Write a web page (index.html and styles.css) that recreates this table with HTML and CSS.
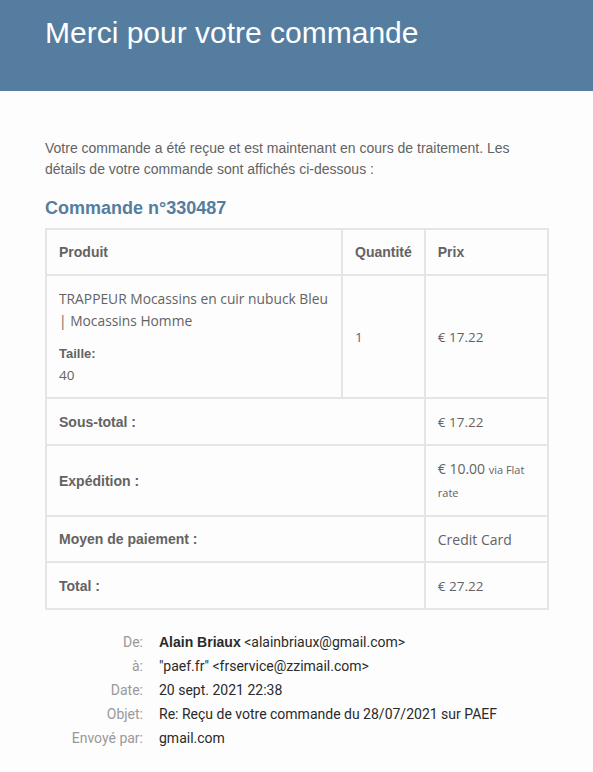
FILE: index.html
```html
<!DOCTYPE html>
<html lang="fr">
<head>
<meta charset="utf-8">
<title>Merci pour votre commande</title>
<link rel="stylesheet" href="styles.css">
</head>
<body>
<header class="hero">
  <h1 class="hero-title">Merci pour votre commande</h1>
</header>
<main class="content">
  <p class="intro">Votre commande a été reçue et est maintenant en cours de traitement. Les détails de votre commande sont affichés ci-dessous :</p>
  <h2 class="order-title">Commande n°330487</h2>
  <table class="order">
    <thead>
      <tr class="row-head">
        <th class="c-prod">Produit</th>
        <th class="c-qty">Quantité</th>
        <th class="c-price">Prix</th>
      </tr>
    </thead>
    <tbody>
      <tr class="row-item">
        <td class="c-prod g">
          <div class="prod-name">TRAPPEUR Mocassins en cuir nubuck Bleu<br>| Mocassins Homme</div>
          <div class="meta-label">Taille:</div>
          <div class="meta-val">40</div>
        </td>
        <td class="c-qty g">1</td>
        <td class="c-price g">€ 17.22</td>
      </tr>
    </tbody>
    <tfoot>
      <tr class="row-sub">
        <th colspan="2">Sous-total :</th>
        <td class="g">€ 17.22</td>
      </tr>
      <tr class="row-ship">
        <th colspan="2">Expédition :</th>
        <td class="g ship"><span class="amt">€ 10.00</span> <span class="via">via Flat rate</span></td>
      </tr>
      <tr class="row-pay">
        <th colspan="2">Moyen de paiement :</th>
        <td class="g pay">Credit Card</td>
      </tr>
      <tr class="row-total">
        <th colspan="2">Total :</th>
        <td class="g">€ 27.22</td>
      </tr>
    </tfoot>
  </table>
</main>
<section class="mailhead">
  <dl class="mh-grid">
    <dt>De:</dt><dd><strong>Alain Briaux</strong> &lt;alainbriaux@gmail.com&gt;</dd>
    <dt>à:</dt><dd>"paef.fr" &lt;frservice@zzimail.com&gt;</dd>
    <dt>Date:</dt><dd>20 sept. 2021 22:38</dd>
    <dt>Objet:</dt><dd>Re: Reçu de votre commande du 28/07/2021 sur PAEF</dd>
    <dt>Envoyé par:</dt><dd>gmail.com</dd>
  </dl>
</section>
</body>
</html>
```
FILE: styles.css
```css
html, body {
  margin: 0;
  padding: 0;
  background: #fdfdfd;
}
body {
  font-family: "Liberation Sans", Arial, sans-serif;
  color: #636363;
}
.hero {
  background: #557da0;
  height: 91px;
  padding: 0 45px;
  box-sizing: border-box;
}
.hero-title {
  margin: 0;
  padding-top: 14px;
  font-size: 30px;
  font-weight: normal;
  line-height: 38px;
  color: #ffffff;
}
.content {
  padding: 47px 45px 0 45px;
}
.intro {
  margin: 0;
  font-size: 14px;
  line-height: 21px;
  color: #636363;
}
.order-title {
  margin: 16px 0 0 0;
  font-size: 18px;
  line-height: 24px;
  font-weight: bold;
  color: #557da0;
}
.order {
  margin-top: 8px;
  width: 504px;
  border-collapse: collapse;
  border: 2px solid #e5e5e5;
  font-size: 14px;
}
.order th, .order td {
  border: 2px solid #e5e5e5;
  padding: 0 12px;
  text-align: left;
  vertical-align: middle;
  color: #636363;
}
.order th {
  font-weight: bold;
}
.c-prod { width: 270px; }
.c-qty { width: 56px; }
.row-head { height: 46px; }
.row-item { height: 123px; }
.row-sub { height: 47px; }
.row-ship { height: 71px; }
.row-pay { height: 46px; }
.row-total { height: 47px; }
.g {
  font-family: "Open Sans", "Noto Sans", sans-serif;
  font-size: 13.5px;
}
.prod-name {
  font-size: 13.8px;
  line-height: 22px;
  white-space: nowrap;
}
.meta-label {
  margin-top: 12px;
  font-family: "Liberation Sans", Arial, sans-serif;
  font-weight: bold;
  font-size: 13px;
  line-height: 20px;
}
.meta-val {
  line-height: 22px;
}
.ship {
  line-height: 22px;
}
.amt {
  font-size: 14px;
}
.via {
  font-size: 11px;
}
.pay {
  font-size: 14px;
}
.mailhead {
  padding: 20px 0 24px 0;
  background: #fdfdfd;
}
.mh-grid {
  display: grid;
  grid-template-columns: 143px auto;
  column-gap: 16px;
  row-gap: 0;
  margin: 0;
  font-family: "Roboto", "Noto Sans", sans-serif;
  font-size: 14px;
  line-height: 24px;
}
.mh-grid dt {
  text-align: right;
  color: #999999;
}
.mh-grid dd {
  margin: 0;
  color: #2a2a2a;
}
.mh-grid strong {
  font-family: "Liberation Sans", Arial, sans-serif;
  font-weight: bold;
}
```
